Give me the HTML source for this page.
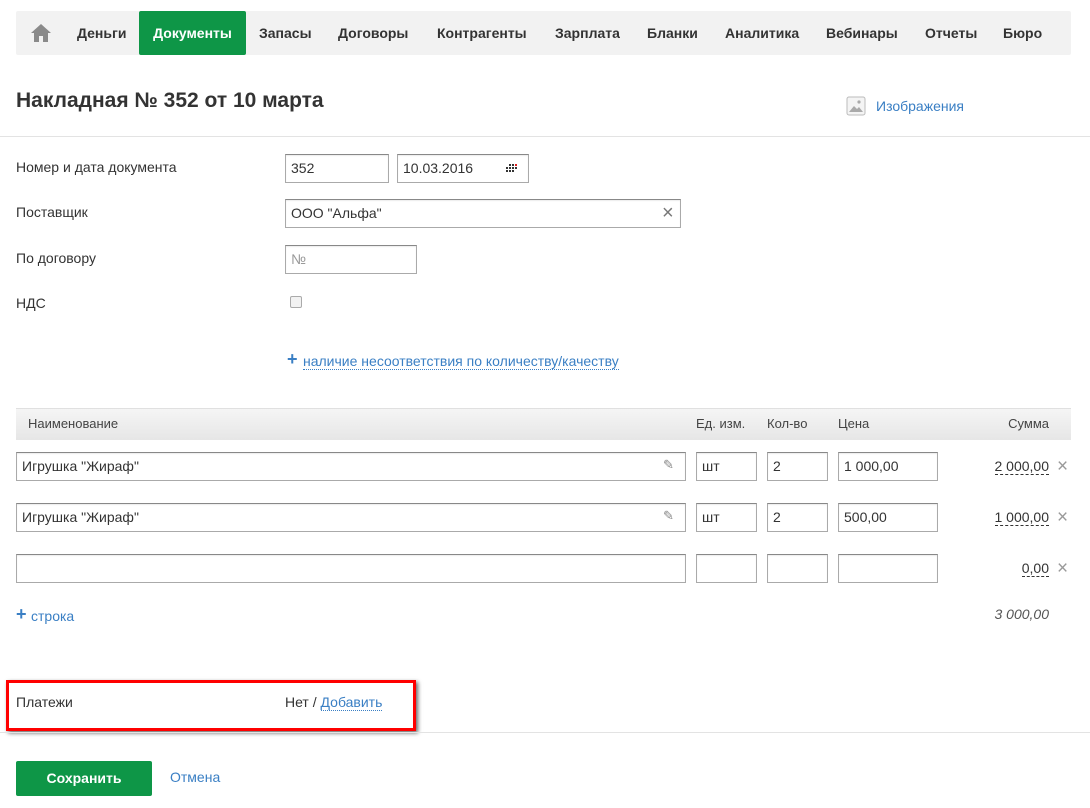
<!DOCTYPE html>
<html><head><meta charset="utf-8"><style>
*{box-sizing:border-box;margin:0;padding:0}
body{width:1090px;height:808px;background:#fff;font-family:"Liberation Sans",sans-serif;color:#333;position:relative;overflow:hidden;font-size:14px}
.a{position:absolute}
.nav{left:16px;top:11px;width:1055px;height:44px;background:#f2f2f2;border-radius:2px}
.ni{position:absolute;top:0;height:44px;line-height:44px;font-weight:bold;font-size:14px;color:#333}
.act{background:#0e9647;color:#fff;border-radius:2px;left:123px;width:107px;text-align:center}
.inp{position:absolute;border:1px solid #aaa;border-top-color:#888;background:#fff;height:29px;line-height:27px;padding-left:5px;font-size:14px;color:#333;box-shadow:inset 0 1px 1px rgba(0,0,0,.08)}
.lbl{position:absolute;left:16px;font-size:14px;color:#333}
.n{font-family:"Liberation Sans Narrow","Liberation Sans",sans-serif;font-size:14px}
.lnk{color:#3a7fc4;border-bottom:1px dotted #3a7fc4}
.sum{position:absolute;right:41px;color:#333;border-bottom:1px dashed #333;line-height:16px}
.x{position:absolute;left:1057px;color:#999;font-size:19px;line-height:19px}
</style></head><body>
<div class="a nav">
 <svg class="a" style="left:15px;top:13px" width="20" height="18" viewBox="0 0 20 18"><path d="M10 0L0 9h3v9h5v-6h4v6h5V9h3z" fill="#8a8a8a"/></svg>
 <div class="ni" style="left:61px">Деньги</div>
 <div class="ni act">Документы</div>
 <div class="ni" style="left:243px">Запасы</div>
 <div class="ni" style="left:322px">Договоры</div>
 <div class="ni" style="left:421px">Контрагенты</div>
 <div class="ni" style="left:539px">Зарплата</div>
 <div class="ni" style="left:631px">Бланки</div>
 <div class="ni" style="left:709px">Аналитика</div>
 <div class="ni" style="left:810px">Вебинары</div>
 <div class="ni" style="left:909px">Отчеты</div>
 <div class="ni" style="left:987px">Бюро</div>
</div>
<div class="a" style="left:16px;top:89px;font-size:21px;font-weight:bold;color:#333">Накладная № 352 от 10 марта</div>
<svg class="a" style="left:846px;top:96px" width="20" height="20" viewBox="0 0 20 20"><rect x="1" y="1" width="18" height="18" rx="2" fill="#f4f4f4" stroke="#bbb"/><path d="M3 16l5-6 3 3 2-2 4 5z" fill="#aaa"/><circle cx="13" cy="6" r="1.6" fill="#aaa"/></svg>
<div class="a" style="left:876px;top:98px;color:#3a7fc4;font-size:14px">Изображения</div>
<div class="a" style="left:0;top:136px;width:1090px;height:1px;background:#e3e3e3"></div>

<div class="lbl" style="top:159px">Номер и дата документа</div>
<div class="lbl" style="top:204px">Поставщик</div>
<div class="lbl" style="top:250px">По договору</div>
<div class="lbl" style="top:295px">НДС</div>
<div class="inp" style="left:285px;top:154px;width:104px">352</div>
<div class="inp" style="left:397px;top:154px;width:132px">10.03.2016</div>
<svg class="a" style="left:506px;top:164px" width="12" height="9"><g fill="#333"><rect x="3" y="0" width="2" height="2"/><rect x="6" y="0" width="2" height="2"/><rect x="9" y="0" width="2" height="2" fill="#e02020"/><rect x="0" y="3" width="2" height="2"/><rect x="3" y="3" width="2" height="2"/><rect x="6" y="3" width="2" height="2"/><rect x="9" y="3" width="2" height="2"/><rect x="0" y="6" width="2" height="2"/><rect x="3" y="6" width="2" height="2"/><rect x="6" y="6" width="2" height="2"/></g></svg>
<div class="inp" style="left:285px;top:199px;width:396px">ООО "Альфа"</div>
<div class="a" style="left:662px;top:203px;color:#777;font-size:20px;line-height:20px">×</div>
<div class="inp" style="left:285px;top:245px;width:132px;color:#999">№</div>
<div class="a" style="left:290px;top:296px;width:12px;height:12px;border:1px solid #aaa;border-radius:2px;background:#f2f2f2"></div>
<div class="a" style="left:287px;top:349px;color:#3a7fc4;font-size:18px;font-weight:bold">+</div>
<div class="a" style="left:303px;top:353px;font-size:14px"><span class="lnk">наличие несоответствия по количеству/качеству</span></div>

<div class="a n" style="left:16px;top:408px;width:1055px;height:32px;background:linear-gradient(#f5f5f5,#e6e6e6);border-top:1px solid #e0e0e0;font-size:13px;line-height:29px;color:#444">
 <span class="a" style="left:12px">Наименование</span><span class="a" style="left:680px">Ед. изм.</span><span class="a" style="left:751px">Кол-во</span><span class="a" style="left:822px">Цена</span><span class="a" style="right:22px">Сумма</span>
</div>

<div class="inp n" style="left:16px;top:452px;width:670px">Игрушка "Жираф"</div>
<div class="a" style="left:663px;top:457px;color:#888;font-size:13px">✎</div>
<div class="inp n" style="left:696px;top:452px;width:61px">шт</div>
<div class="inp n" style="left:767px;top:452px;width:61px">2</div>
<div class="inp n" style="left:838px;top:452px;width:100px">1 000,00</div>
<div class="sum n" style="top:458px">2 000,00</div><div class="x" style="top:457px">×</div>

<div class="inp n" style="left:16px;top:503px;width:670px">Игрушка "Жираф"</div>
<div class="a" style="left:663px;top:508px;color:#888;font-size:13px">✎</div>
<div class="inp n" style="left:696px;top:503px;width:61px">шт</div>
<div class="inp n" style="left:767px;top:503px;width:61px">2</div>
<div class="inp n" style="left:838px;top:503px;width:100px">500,00</div>
<div class="sum n" style="top:509px">1 000,00</div><div class="x" style="top:508px">×</div>

<div class="inp n" style="left:16px;top:554px;width:670px"></div>
<div class="inp n" style="left:696px;top:554px;width:61px"></div>
<div class="inp n" style="left:767px;top:554px;width:61px"></div>
<div class="inp n" style="left:838px;top:554px;width:100px"></div>
<div class="sum n" style="top:560px">0,00</div><div class="x" style="top:559px">×</div>

<div class="a" style="left:16px;top:604px;color:#3a7fc4;font-size:18px;font-weight:bold">+</div>
<div class="a n" style="left:31px;top:608px;color:#3a7fc4">строка</div>
<div class="a n" style="right:41px;top:606px;font-style:italic;color:#555">3 000,00</div>

<div class="a" style="left:6px;top:680px;width:410px;height:51px;border:3px solid #f00;box-shadow:2px 2px 4px rgba(0,0,0,.6)"></div>
<div class="lbl" style="top:694px">Платежи</div>
<div class="a" style="left:285px;top:694px">Нет / <span class="lnk">Добавить</span></div>
<div class="a" style="left:0;top:732px;width:1090px;height:1px;background:#e3e3e3"></div>
<div class="a" style="left:16px;top:761px;width:136px;height:35px;background:#0e9647;border-radius:2px;color:#fff;font-weight:bold;font-size:14px;line-height:35px;text-align:center">Сохранить</div>
<div class="a" style="left:170px;top:769px;color:#3a7fc4">Отмена</div>
</body></html>
